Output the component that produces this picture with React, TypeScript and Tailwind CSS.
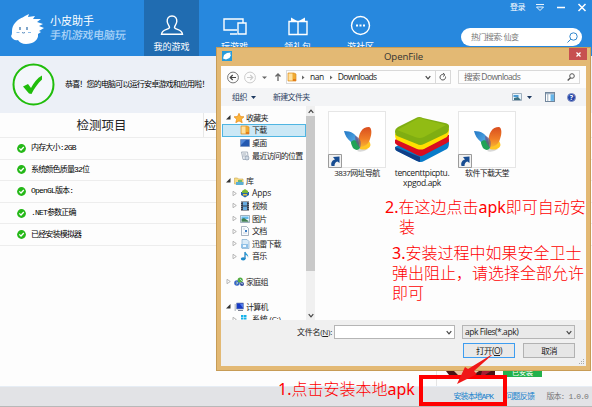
import React from "react";

const UI = "font-['Open_Sans','Noto_Sans_CJK_SC',sans-serif]";
const SONG = "font-['Liberation_Mono','Noto_Sans_CJK_SC',monospace]";

function Mascot() {
  return (
    <svg className="h-[31px] w-[33px] shrink-0" viewBox="0 0 33 31">
      <path
        fill="#fff"
        d="M4 9C7 5 11 4 14 2L18 0 17 3 24 2 22 5 30 5 26 8 32 10 28 12 33 14 28 17 30 18 27 20C28 26 22 30 15 30 11 30 8 28 7 26 4 27 1 25 0 22 1 21 1 19 1 17 1 14 2 11 4 9Z"
      />
      <path d="M9 13v3M16 13v3" stroke="#2b6ba9" strokeWidth="1.2" />
      <path d="M5.500 18.500h3M17 18.500h3" stroke="#8bbbe8" strokeWidth="1" />
      <path d="M11 18.500q1.500 1 3 0" stroke="#2b6ba9" strokeWidth=".8" fill="none" />
    </svg>
  );
}

function NavItem({ label, active, children }: { label: string; active?: boolean; children: React.ReactNode }) {
  return (
    <div className={`flex h-14 flex-col items-center pt-[15px] ${active ? "w-[55px] bg-[#206cb1]" : "w-[63px]"}`}>
      <svg className="h-[21px] w-6" viewBox="0 0 24 21" fill="none" stroke="#fff" strokeWidth="1.4">
        {children}
      </svg>
      <span className="mt-[4px] whitespace-nowrap text-[9px] leading-[13px] text-white">{label}</span>
    </div>
  );
}

function Check({ big }: { big?: boolean }) {
  return big ? (
    <svg className="h-[43px] w-[43px] shrink-0" viewBox="0 0 43 43">
      <circle cx="21.500" cy="21.500" r="20" fill="#fff" fillOpacity=".45" stroke="#20bd0b" strokeWidth="2" />
      <path d="M11 23.500 16 21 19 25C22 19.500 25 15 30 12.500L30 16.500C26 20 22 26 19.500 31L17 30.500Z" fill="#20bd0b" />
    </svg>
  ) : (
    <svg className="h-[9px] w-[9px] shrink-0" viewBox="0 0 9 9">
      <circle cx="4.500" cy="4.500" r="4.400" fill="#25b818" />
      <path d="M2.300 4.400 4 6 6.800 3" fill="none" stroke="#fff" strokeWidth="1.300" />
    </svg>
  );
}

function Butterfly() {
  return (
    <svg className="h-[27px] w-[29px]" viewBox="0 0 29 27">
      <defs>
        <linearGradient id="wingL" x2="1" y2="1">
          <stop stopColor="#2277c5" />
          <stop offset=".6" stopColor="#4ba0df" />
          <stop offset="1" stopColor="#14804b" />
        </linearGradient>
        <linearGradient id="wingR" x2="0" y2="1">
          <stop stopColor="#d94e20" />
          <stop offset=".6" stopColor="#f07d26" />
          <stop offset="1" stopColor="#f6b331" />
        </linearGradient>
      </defs>
      <path d="M14 25q5 2 11-2l-7-2Z" fill="#aaa" opacity=".45" />
      <path d="M1 5C8 5 14 8 16 16L16 21C12 20 9 19 8 16 4 13 2 9 1 5Z" fill="url(#wingL)" />
      <path d="M8 16C10 13 14 14 16 17L17 22C15 25 12 24 10 22 9 20 8 18 8 16Z" fill="#20a257" />
      <path d="M17 20C20 14 26 13 27 17 29 21 24 25 17 23Z" fill="#ffc624" />
      <path d="M15.500 16C15.500 7 19 1 26 1 29 2 29 8 27 13 26 18 21 21 17 21Z" fill="url(#wingR)" />
      <path d="M12 10C17 11 19 16 17 22 14 19 12 15 12 10Z" fill="#6c5687" opacity=".7" />
    </svg>
  );
}

function Shortcut({ label, tracking }: { label: string; tracking: string }) {
  return (
    <div className="flex w-[58px] flex-col items-center">
      <div className="relative flex h-[57px] w-[58px] items-center justify-center border border-[#e6e6e6] bg-white">
        <Butterfly />
        <svg className="absolute -bottom-px -left-px h-[14px] w-[14px]" viewBox="0 0 14 14">
          <path d="M.5.5h13v13H.5Z" fill="#f2f2f2" stroke="#9b9b9b" />
          <path d="M3.500 12C2.500 8.500 4.500 6 7 5.500L5 3 11.500 2.500 11.500 9 9.500 7.500C7.500 8 6.500 9.500 6.500 12Z" fill="#174c91" />
        </svg>
      </div>
      <span className={`whitespace-nowrap leading-[10px] ${tracking}`}>{label}</span>
    </div>
  );
}

function Stacks() {
  return (
    <svg className="h-[46px] w-[54px]" viewBox="0 0 54 46">
      <path d="M0 30 27 16 54 25C54 30 53 32 50 33L29 44Q26 46 22 44L2 34Q0 33 0 30Z" fill="#087bc9" />
      <path d="M0 30 25 40V45L22 44 2 34Q0 33 0 30Z" fill="#113e86" />
      <path d="M0 23 27 10 54 18C54 24 53 26 50 27L29 38Q26 40 22 38L2 28Q0 27 0 23Z" fill="#d90d20" />
      <path d="M0 24 24 35Q26 36 28 35L54 22.500" fill="none" stroke="#d90d20" strokeWidth="4" />
      <path d="M0 17 27 5 54 12C54 17 53 20 50 21L29 32Q26 33 22 32L2 23Q0 22 0 17Z" fill="#ffe000" />
      <path d="M0 14Q0 12 3 10L21 1Q24-1 28 1L50 6Q54 7 54 9C54 14 53 16 50 17L29 27Q25 29 22 27L2 19Q0 18 0 14Z" fill="#7fae12" />
      <path d="M2 13 22 2Q25 0 28 2L51 8 29 20Q25 22 20 20Z" fill="#91bc14" />
    </svg>
  );
}

type IconKind = "star" | "folder" | "desktop" | "recent" | "library" | "apps" | "video" | "image" | "doc" | "thunder" | "music" | "home" | "computer" | "disk";

function TreeIcon({ kind }: { kind: IconKind }) {
  const art: Record<IconKind, React.ReactNode> = {
    star: <path d="M5 .3 6.500 3.500 10 3.800 7.400 6.200 8.200 9.700 5 7.900 1.800 9.700 2.600 6.200 0 3.800 3.500 3.500Z" fill="#fbb43a" stroke="#e88b17" strokeWidth=".7" />,
    folder: <><path d="M1 1h6l2 1v7H1Z" fill="#f0ab32" stroke="#dc8d23" strokeWidth=".7" /><path d="M1.500 1.500h4v7h-4Z" fill="#ffe1a0" /><path d="M6 7h3v2H6Z" fill="#e47c19" /></>,
    desktop: <><path d="M.5 1.500h9v7h-9Z" fill="#2358b0" stroke="#7089b5" strokeWidth=".6" /><path d="M1 2h5L1 7Z" fill="#4f85d6" /></>,
    recent: <><path d="M1.500 1h6l1 7.500H3Z" fill="#eef1f4" stroke="#8d98a7" strokeWidth=".7" /><path d="M3 3h3M3 5h4" stroke="#8d98a7" strokeWidth=".7" /><circle cx="7" cy="7" r="2" fill="#cfdae5" stroke="#8492a5" strokeWidth=".6" /></>,
    library: <><path d="M.5 2h3l1 1h4.500v5H.5Z" fill="#f7dc85" stroke="#cba94f" strokeWidth=".6" /><path d="M2 6h7.500v3H2Z" fill="#5baed4" /><path d="M4 4h4v2H4Z" fill="#72b66b" /></>,
    apps: <><path d="M1 4h8v3L5 9.500 1 7Z" fill="#2565ad" /><path d="M2 3 5 1 8 3v2H2Z" fill="#78b636" /><path d="M3 6h4v1.500H3Z" fill="#e1c03a" /></>,
    video: <><path d="M1 .5h8v9H1Z" fill="#343c4b" /><path d="M3 1h4v3.500H3ZM3 5.500h4V9H3Z" fill="#67abe0" /><path d="M1.800 1v8M8.200 1v8" stroke="#bec5d2" strokeDasharray="1 1" strokeWidth=".7" /></>,
    image: <><path d="M.5 1.500h9v7h-9Z" fill="#eaf6ff" stroke="#7891a3" strokeWidth=".7" /><path d="M1.500 2.500h7V5h-7Z" fill="#64bbeb" /><path d="M1.500 5 4 4l4.500 3v.8h-7Z" fill="#407e51" /></>,
    doc: <><path d="M1.500.5h5l2 2v7h-7Z" fill="#f9fcff" stroke="#8495a7" strokeWidth=".7" /><path d="M5 4h2v2H5Z" fill="#3b7dc5" /><path d="M3 3h2M3 7h4" stroke="#a4b4c3" strokeWidth=".6" /></>,
    thunder: <><path d="M2 .5h5l2 2v7H2Z" fill="#d9ebf8" stroke="#7eabcf" strokeWidth=".7" /><path d="M1 5h7v4H1Z" fill="#90c1e7" /><path d="M3 6h3v2H3Z" fill="#eff8ff" /></>,
    music: <><path d="M5 1v7" stroke="#1d77b9" strokeWidth="1.200" /><path d="M5 .5C6 3 9 3 8 7 8 4 6 4 5 4Z" fill="#299bd5" /><ellipse cx="3.200" cy="7.800" rx="2.400" ry="1.600" fill="#1d8acb" /></>,
    home: <><circle cx="3" cy="6" r="2.800" fill="#3866c5" /><circle cx="6.200" cy="3" r="2.600" fill="#55ad43" /><circle cx="8" cy="7" r="2" fill="#334899" /><path d="M2 5 4 6 2 7M6 2l2 2M7 6l2 1" stroke="#c6edf4" strokeWidth=".8" /></>,
    computer: <><path d="M2.500 1h7v6h-7Z" fill="#173ac4" stroke="#8495b7" strokeWidth=".7" /><path d="M6 2h3v4Z" fill="#5580ed" /><path d="M.5 2h1.500v7H.5Z" fill="#c3c8ce" /><path d="M4 8.500h5" stroke="#7b8190" /></>,
    disk: <><path d="M1 1h2.500v2H1ZM4 1h2.500v2H4ZM1 3.500h2.500v2H1ZM4 3.500h2.500v2H4Z" fill="#16b2e9" /><path d="M1 6h8v3H1Z" fill="#a9b0b8" /></>,
  };
  return <svg className="h-[10px] w-[10px] shrink-0" viewBox="0 0 10 10">{art[kind]}</svg>;
}

const tree: { icon?: IconKind; label?: string; level?: 0 | 1; arrow?: "open" | "closed"; selected?: boolean }[] = [
  { icon: "star", label: "收藏夹", level: 0, arrow: "open" },
  { icon: "folder", label: "下载", level: 1, selected: true },
  { icon: "desktop", label: "桌面", level: 1 },
  { icon: "recent", label: "最近访问的位置", level: 1 },
  {},
  { icon: "library", label: "库", level: 0, arrow: "open" },
  { icon: "apps", label: "Apps", level: 1, arrow: "closed" },
  { icon: "video", label: "视频", level: 1, arrow: "closed" },
  { icon: "image", label: "图片", level: 1, arrow: "closed" },
  { icon: "doc", label: "文档", level: 1, arrow: "closed" },
  { icon: "thunder", label: "迅雷下载", level: 1, arrow: "closed" },
  { icon: "music", label: "音乐", level: 1, arrow: "closed" },
  {},
  { icon: "home", label: "家庭组", level: 0, arrow: "closed" },
  {},
  { icon: "computer", label: "计算机", level: 0, arrow: "open" },
  { icon: "disk", label: "系统 (C:)", level: 1, arrow: "closed" },
];

function Tree() {
  return (
    <div className="h-[214px] w-[85px] shrink-0 overflow-hidden pt-[5.500px] pl-px">
      {tree.map((row, i) => (
        <div
          key={i}
          className={`flex h-[12.600px] items-center gap-[2.500px] whitespace-nowrap ${row.level === 1 ? "pl-[10px]" : "pl-[4px]"} ${row.selected ? "bg-[#cbe8f6] outline outline-1 -outline-offset-1 outline-[#4fb5e2]" : ""}`}
        >
          {row.label && (
            <>
              <svg className="h-[5px] w-[5px] shrink-0" viewBox="0 0 5 5">
                {row.arrow === "open" && <path d="M4.500 0v4.500H0Z" fill="#333" />}
                {row.arrow === "closed" && <path d="M1 .3 4.300 2.500 1 4.700Z" fill="#fff" stroke="#999" strokeWidth=".7" />}
              </svg>
              <TreeIcon kind={row.icon!} />
              <span className={`leading-[10px] ${row.label === "Apps" ? "text-[8.500px] -tracking-[0.200px]" : row.icon === "disk" ? "text-[8px] -tracking-[0.200px]" : "text-[8px] -tracking-[0.800px]"}`}>
                {row.label}
              </span>
            </>
          )}
        </div>
      ))}
    </div>
  );
}

function Chevron({ up, className = "" }: { up?: boolean; className?: string }) {
  return (
    <svg className={`h-[5px] w-[6px] ${className}`} viewBox="0 0 6 5" fill="none" stroke="#444" strokeWidth="1.200">
      <path d={up ? "M.7 3.800 3 1.200 5.300 3.800" : "M.7 1.200 3 3.800 5.300 1.200"} />
    </svg>
  );
}

function FileDialog() {
  return (
    <div className={`absolute left-[216px] top-[47px] flex h-[324px] w-[375px] flex-col border border-[#c79c56] bg-[#e3b974] px-1 pb-1 text-[#222] ${UI}`}>
      <div className="relative flex h-[18px] shrink-0 items-center justify-center">
        <svg className="absolute left-[1px] top-[3px] h-[10px] w-[10px]" viewBox="0 0 10 10">
          <path fill="#289bd9" d="M0 0h10v10H0Z" />
          <path d="M2 4 5 2 9 1.500 8 3 9 4 7.500 7 4 8.500 1 7.500Z" fill="#fff" />
        </svg>
        <span className="text-[9.600px] -tracking-[0.100px] text-[#333]">OpenFile</span>
        <div className="absolute right-[-1px] top-0 flex h-[12px] w-[18px] items-center justify-center bg-[#c74f50]">
          <svg className="h-[5px] w-[5px]" viewBox="0 0 5 5"><path d="M.5.5l4 4M4.500.5l-4 4" stroke="#fff" strokeWidth="1.200" /></svg>
        </div>
      </div>

      <div className="flex min-h-0 flex-1 flex-col bg-[#fdfdfd]">
        <div className="flex h-[22px] shrink-0 items-center pl-[5px]">
          <svg className="h-[13px] w-[60px] shrink-0" viewBox="0 0 60 13" fill="none">
            <circle cx="7" cy="6.500" r="5.400" stroke="#777" />
            <path d="M10 6.500H4.500M6.700 4 4.200 6.500 6.700 9" stroke="#444" strokeWidth="1.200" />
            <circle cx="24" cy="6.500" r="5.400" stroke="#ccc" />
            <path d="M21 6.500h5.500M24.300 4l2.500 2.500L24.300 9" stroke="#ccc" strokeWidth="1.200" />
            <path d="M36 5.500h5L38.500 8Z" fill="#666" />
            <path d="M52 10V3M49.500 5.500 52 3l2.500 2.500" stroke="#666" strokeWidth="1.300" />
          </svg>
          <div className="flex h-[14px] w-[165px] shrink-0 items-center border border-[#d9d9d9] text-[8.500px]">
            <TreeIcon kind="folder" />
            <svg className="ml-[5px] mr-[5px] h-[5px] w-[3px]" viewBox="0 0 3 5"><path d="M0 .5 2.500 2.500 0 4.500Z" fill="#666" /></svg>
            <span className="-tracking-[0.500px]">nan</span>
            <svg className="ml-[6px] mr-[5px] h-[5px] w-[3px]" viewBox="0 0 3 5"><path d="M0 .5 2.500 2.500 0 4.500Z" fill="#666" /></svg>
            <span className="-tracking-[0.600px]">Downloads</span>
            <Chevron className="ml-auto mr-[4px]" />
            <div className="flex h-full w-[15px] items-center justify-center border-l border-[#d9d9d9]">
              <svg className="h-[8px] w-[8px]" viewBox="0 0 8 8" fill="none" stroke="#555"><path d="M6.500 3.500A2.800 2.800 0 1 1 4.500 1.500M4 0l2 1.800L4 3.500" /></svg>
            </div>
          </div>
          <div className="ml-[7px] flex h-[14px] w-[122px] shrink-0 items-center justify-between border border-[#d9d9d9] pl-[5px] pr-[4px] text-[8.500px] text-[#666]">
            <span className="-tracking-[0.620px]">搜索 Downloads</span>
            <svg className="h-[8px] w-[8px]" viewBox="0 0 8 8" fill="none" stroke="#555"><circle cx="5" cy="3" r="2.300" /><path d="M3.500 4.700.7 7.500" strokeWidth="1.400" /></svg>
          </div>
        </div>

        <div className="flex h-[18px] shrink-0 items-center bg-[#f3f4f6] pl-[11px] pr-[10px] text-[8px] text-[#2b405f]">
          <span className="-tracking-[0.500px]">组织</span>
          <svg className="ml-[4px] h-[3px] w-[5px]" viewBox="0 0 5 3"><path d="M0 0h5L2.500 3Z" fill="#1e3961" /></svg>
          <span className="ml-[17px] -tracking-[0.700px]">新建文件夹</span>
          <svg className="ml-auto h-[8px] w-[10px]" viewBox="0 0 10 8"><path d="M.5.5h9v7h-9Z" fill="#e6f3fb" stroke="#a0afbd" /><path d="M1.500 2h5v2h-5Z" fill="#4b9bd4" /><path d="M2 5 6 4 9 7H2Z" fill="#3d7182" /></svg>
          <svg className="ml-[5px] h-[3px] w-[5px]" viewBox="0 0 5 3"><path d="M0 0h5L2.500 3Z" fill="#1e3961" /></svg>
          <svg className="ml-[13px] h-[10px] w-[10px]" viewBox="0 0 10 9" preserveAspectRatio="none"><path d="M.5.5h9v8h-9Z" fill="#fff" stroke="#71869c" /><path d="M5.500 2H9v6H5.500Z" fill="#65b5ea" /><path d="M1 1.500h8M2.800 2v6" stroke="#9caec0" /></svg>
          <div className="ml-[12px] flex h-[9px] w-[9px] items-center justify-center rounded-full border border-[#8492c4] bg-[#2445a9] text-[7px] font-bold leading-none text-white">?</div>
        </div>

        <div className="flex h-[214px] shrink-0">
          <Tree />
          <div className="flex w-[9px] shrink-0 flex-col items-center bg-[#f0f0f0]">
            <div className="flex h-[10px] items-center"><Chevron up /></div>
            <div className="h-[155px] w-full bg-[#c9c9c9]" />
            <div className="mt-auto flex h-[10px] items-center"><Chevron /></div>
          </div>
          <div className="flex flex-1 items-start pl-[13px] pt-[5px]">
            <Shortcut label="3837网址导航" tracking="text-[8px] -tracking-[0.600px]" />
            <div className="flex w-[72px] flex-col items-center pt-[6px]">
              <Stacks />
              <span className="mt-[5px] whitespace-nowrap text-center text-[8.500px] leading-[9.500px] -tracking-[0.380px]">tencenttpicptu.<br />xpgod.apk</span>
            </div>
            <Shortcut label="软件下载天堂" tracking="text-[8px] -tracking-[0.700px]" />
          </div>
        </div>

        <div className="flex flex-1 flex-col bg-[#f0f0f0] pr-[11px] pt-[5px] text-[8.500px]">
          <div className="flex items-center justify-end">
            <span className="mr-[2px] text-[8px] -tracking-[0.250px]">文件名(<u>N</u>):</span>
            <div className="flex h-[14px] w-[121px] items-center justify-end border border-[#b5b5b5] bg-white pr-[2px]"><Chevron /></div>
            <div className="ml-[7px] flex h-[14px] w-[113px] items-center justify-between border border-[#b5b5b5] bg-[#eaeaea] pl-[2px] pr-[2px]">
              <span className="-tracking-[0.450px]">apk Files(*.apk)</span><Chevron />
            </div>
          </div>
          <div className="mt-[4px] flex justify-end gap-[8px]">
            <div className="flex h-[15px] w-[52px] items-center justify-center border border-[#3e9df0] bg-[#e9e9e9] pt-px -tracking-[0.500px]">打开(<u>O</u>)</div>
            <div className="flex h-[15px] w-[52px] items-center justify-center border border-[#b2b2b2] bg-[#e6e6e6] pt-px -tracking-[0.800px]">取消</div>
          </div>
        </div>
      </div>
      <svg className="absolute bottom-[6px] right-[6px] h-[5px] w-[5px]" viewBox="0 0 5 5"><path d="M4 0h1v1H4ZM2 2h1v1H2ZM4 2h1v1H4ZM0 4h1v1H0ZM2 4h1v1H2ZM4 4h1v1H4Z" fill="#aaa" /></svg>
    </div>
  );
}

function Annotation({ className, children }: { className: string; children: React.ReactNode }) {
  return (
    <div className={`absolute whitespace-nowrap font-['Noto_Sans','Noto_Sans_CJK_SC',sans-serif] text-[16px] text-[#ff0000] ${className}`}>
      {children}
    </div>
  );
}

const Thin = ({ children }: { children: React.ReactNode }) => <span className="font-light">{children}</span>;

export default function App() {
  return (
    <div className={`relative flex h-[407px] w-[592px] flex-col overflow-hidden bg-[#fdfdfd] ${UI}`}>
      <header className="flex h-14 shrink-0 bg-[#2788de]">
        <div className="flex w-[144px] items-start pl-[11px] pt-[14px]">
          <Mascot />
          <div className="ml-[6px] whitespace-nowrap text-white">
            <div className="text-[11px] leading-[14px]">小皮助手</div>
            <div className="-skew-x-6 text-[11px] font-medium leading-[14px] -tracking-[0.200px] text-[#a9d2f7]">手机游戏电脑玩</div>
          </div>
        </div>
        <NavItem label="我的游戏" active>
          <path d="M12 1C8.500 1 7 3.500 7.200 6.500 7.500 9.500 9.500 10.500 9.500 12.500 9 15 2 14 1.500 19.300H22.500C22 14 15 15 14.500 12.500 14.500 10.500 16.500 9.500 16.800 6.500 17 3.500 15.500 1 12 1Z" />
        </NavItem>
        <div className="ml-[4px] flex">
          <NavItem label="玩游戏"><path d="M14 15H1V4h19v4M15 8h8v11h-8ZM7 19h7" /></NavItem>
          <NavItem label="领礼包"><path d="M3 6.500h9v13H3ZM12 6.500h9v13h-9Z" /><path d="M5 2.500 12 6.500 19 2.500V6H5Z" fill="#fff" stroke="none" /></NavItem>
          <NavItem label="游社区"><circle cx="11.500" cy="10.500" r="9" /><path d="M7 9.500h2v2H7ZM10.500 9.500h2v2h-2ZM14 9.500h2v2h-2Z" fill="#fff" stroke="none" /></NavItem>
        </div>
        <div className="ml-auto flex flex-col items-end">
          <div className="flex h-[14px] items-center pr-[5px] text-white">
            <span className="text-[8px] -tracking-[0.500px]">登录</span>
            <svg className="ml-[10px] h-[9px] w-[52px]" viewBox="0 0 52 9" fill="none" stroke="#fff"><path d="M1 1.500h8M1.500 4h7L5 7.500Z" strokeWidth=".9" /><path d="M22 4.500h8" strokeWidth="1.500" /><path d="M43.500 1l7 7M50.500 1l-7 7" strokeWidth="1.500" /></svg>
          </div>
          <div className="mr-[10px] mt-[14px] flex h-[18px] w-[121px] items-center justify-between rounded-full bg-white pl-[10px] pr-[4px] text-[8px] text-[#777]">
            <span className="-tracking-[0.600px]">热门搜索: 仙变</span>
            <svg className="h-[11px] w-[11px]" viewBox="0 0 11 11" fill="none" stroke="#3187cd"><circle cx="6.500" cy="4.500" r="3.700" /><path d="M3.800 7.200.5 10.500" /></svg>
          </div>
        </div>
      </header>

      <section className="flex h-[57px] shrink-0 items-center bg-[#ecf0f7] pl-[12px]">
        <Check big />
        <span className="ml-[10px] whitespace-nowrap font-['Liberation_Sans','Noto_Sans_CJK_SC',sans-serif] text-[8px] -tracking-[0.820px] text-black">恭喜！您的电脑可以运行安卓游戏和应用啦！</span>
      </section>

      <main className="min-h-0 flex-1">
        <div className={`flex h-[25px] items-center border-b border-[#ededed] text-[12.500px] text-[#222] ${SONG}`}>
          <div className="flex h-full w-[204px] items-center justify-center border-r border-[#e8e8e8] pt-[4px]">检测项目</div>
          <div className="pt-[4px]">检</div>
        </div>
        {["内存大小:2GB", "系统颜色质量32位", "OpenGL版本:", ".NET参数正确", "已经安装模拟器"].map((text) => (
          <div key={text} className={`flex h-[21.600px] items-center border-b border-[#ededed] pl-[17px] text-[8px] text-black ${SONG}`}>
            <Check />
            <span className="ml-[5px] whitespace-nowrap -tracking-[0.820px]">{text}</span>
          </div>
        ))}
      </main>

      <section className="flex h-[16px] shrink-0 justify-end border-b border-[#e6edf5] pr-[50px]">
        <div className="mr-[9px] h-full border-l border-[#e4e4e4]" />
        <svg className="h-[4px] w-[49px]" viewBox="0 0 49 4"><path fill="#491314" d="M0 0h49v4H3Z" /><path fill="#eac6a5" d="M8 0h25l-6 4H12Z" /><path fill="#a81c32" d="M36 0h9l-6 4h-4Z" /></svg>
        <div className="ml-[8px] flex h-[6px] w-[39px] items-end justify-center bg-[#22b14c] text-[7px] leading-[9px] text-white">已安装</div>
      </section>
      <footer className={`flex h-[20px] shrink-0 items-center justify-end border-b border-[#b8b8b8] bg-[#e2e3e6] pr-[4px] text-[8px] ${SONG}`}>
        <span className="-tracking-[0.950px] text-[#1682cd]">安装本地APK</span>
        <span className="ml-[12px] -tracking-[0.700px] text-[#1682cd]">问题反馈</span>
        <span className="ml-[12px] flex gap-[4px] text-[#777]">
          <span className="-tracking-[0.900px]">版本:</span>
          <span className="-tracking-[0.900px]">1.0.0</span>
        </span>
      </footer>

      <FileDialog />

      <Annotation className="left-[385px] top-[197px] leading-[20px]">2.<Thin>在这边点击</Thin>apk<Thin>即可自动安<br /><span className="pl-[14px]">装</span></Thin></Annotation>
      <Annotation className="left-[392px] top-[243px] leading-[20px]">3.<Thin>安装过程中如果安全卫士<br />弹出阻止，请选择全部允许<br />即可</Thin></Annotation>
      <Annotation className="left-[278px] top-[379px] leading-[20px]">1.<Thin>点击安装本地</Thin>apk</Annotation>
      <svg className="absolute left-[418px] top-[353px] h-[54px] w-[92px]" viewBox="0 0 92 54">
        <path d="M3 24h84v27H3Z" fill="none" stroke="#f00" strokeWidth="4" />
        <path d="M74 2 56 18 59 21 39 31 47 14 50 16 73 2Z" fill="#f01818" />
      </svg>
    </div>
  );
}
